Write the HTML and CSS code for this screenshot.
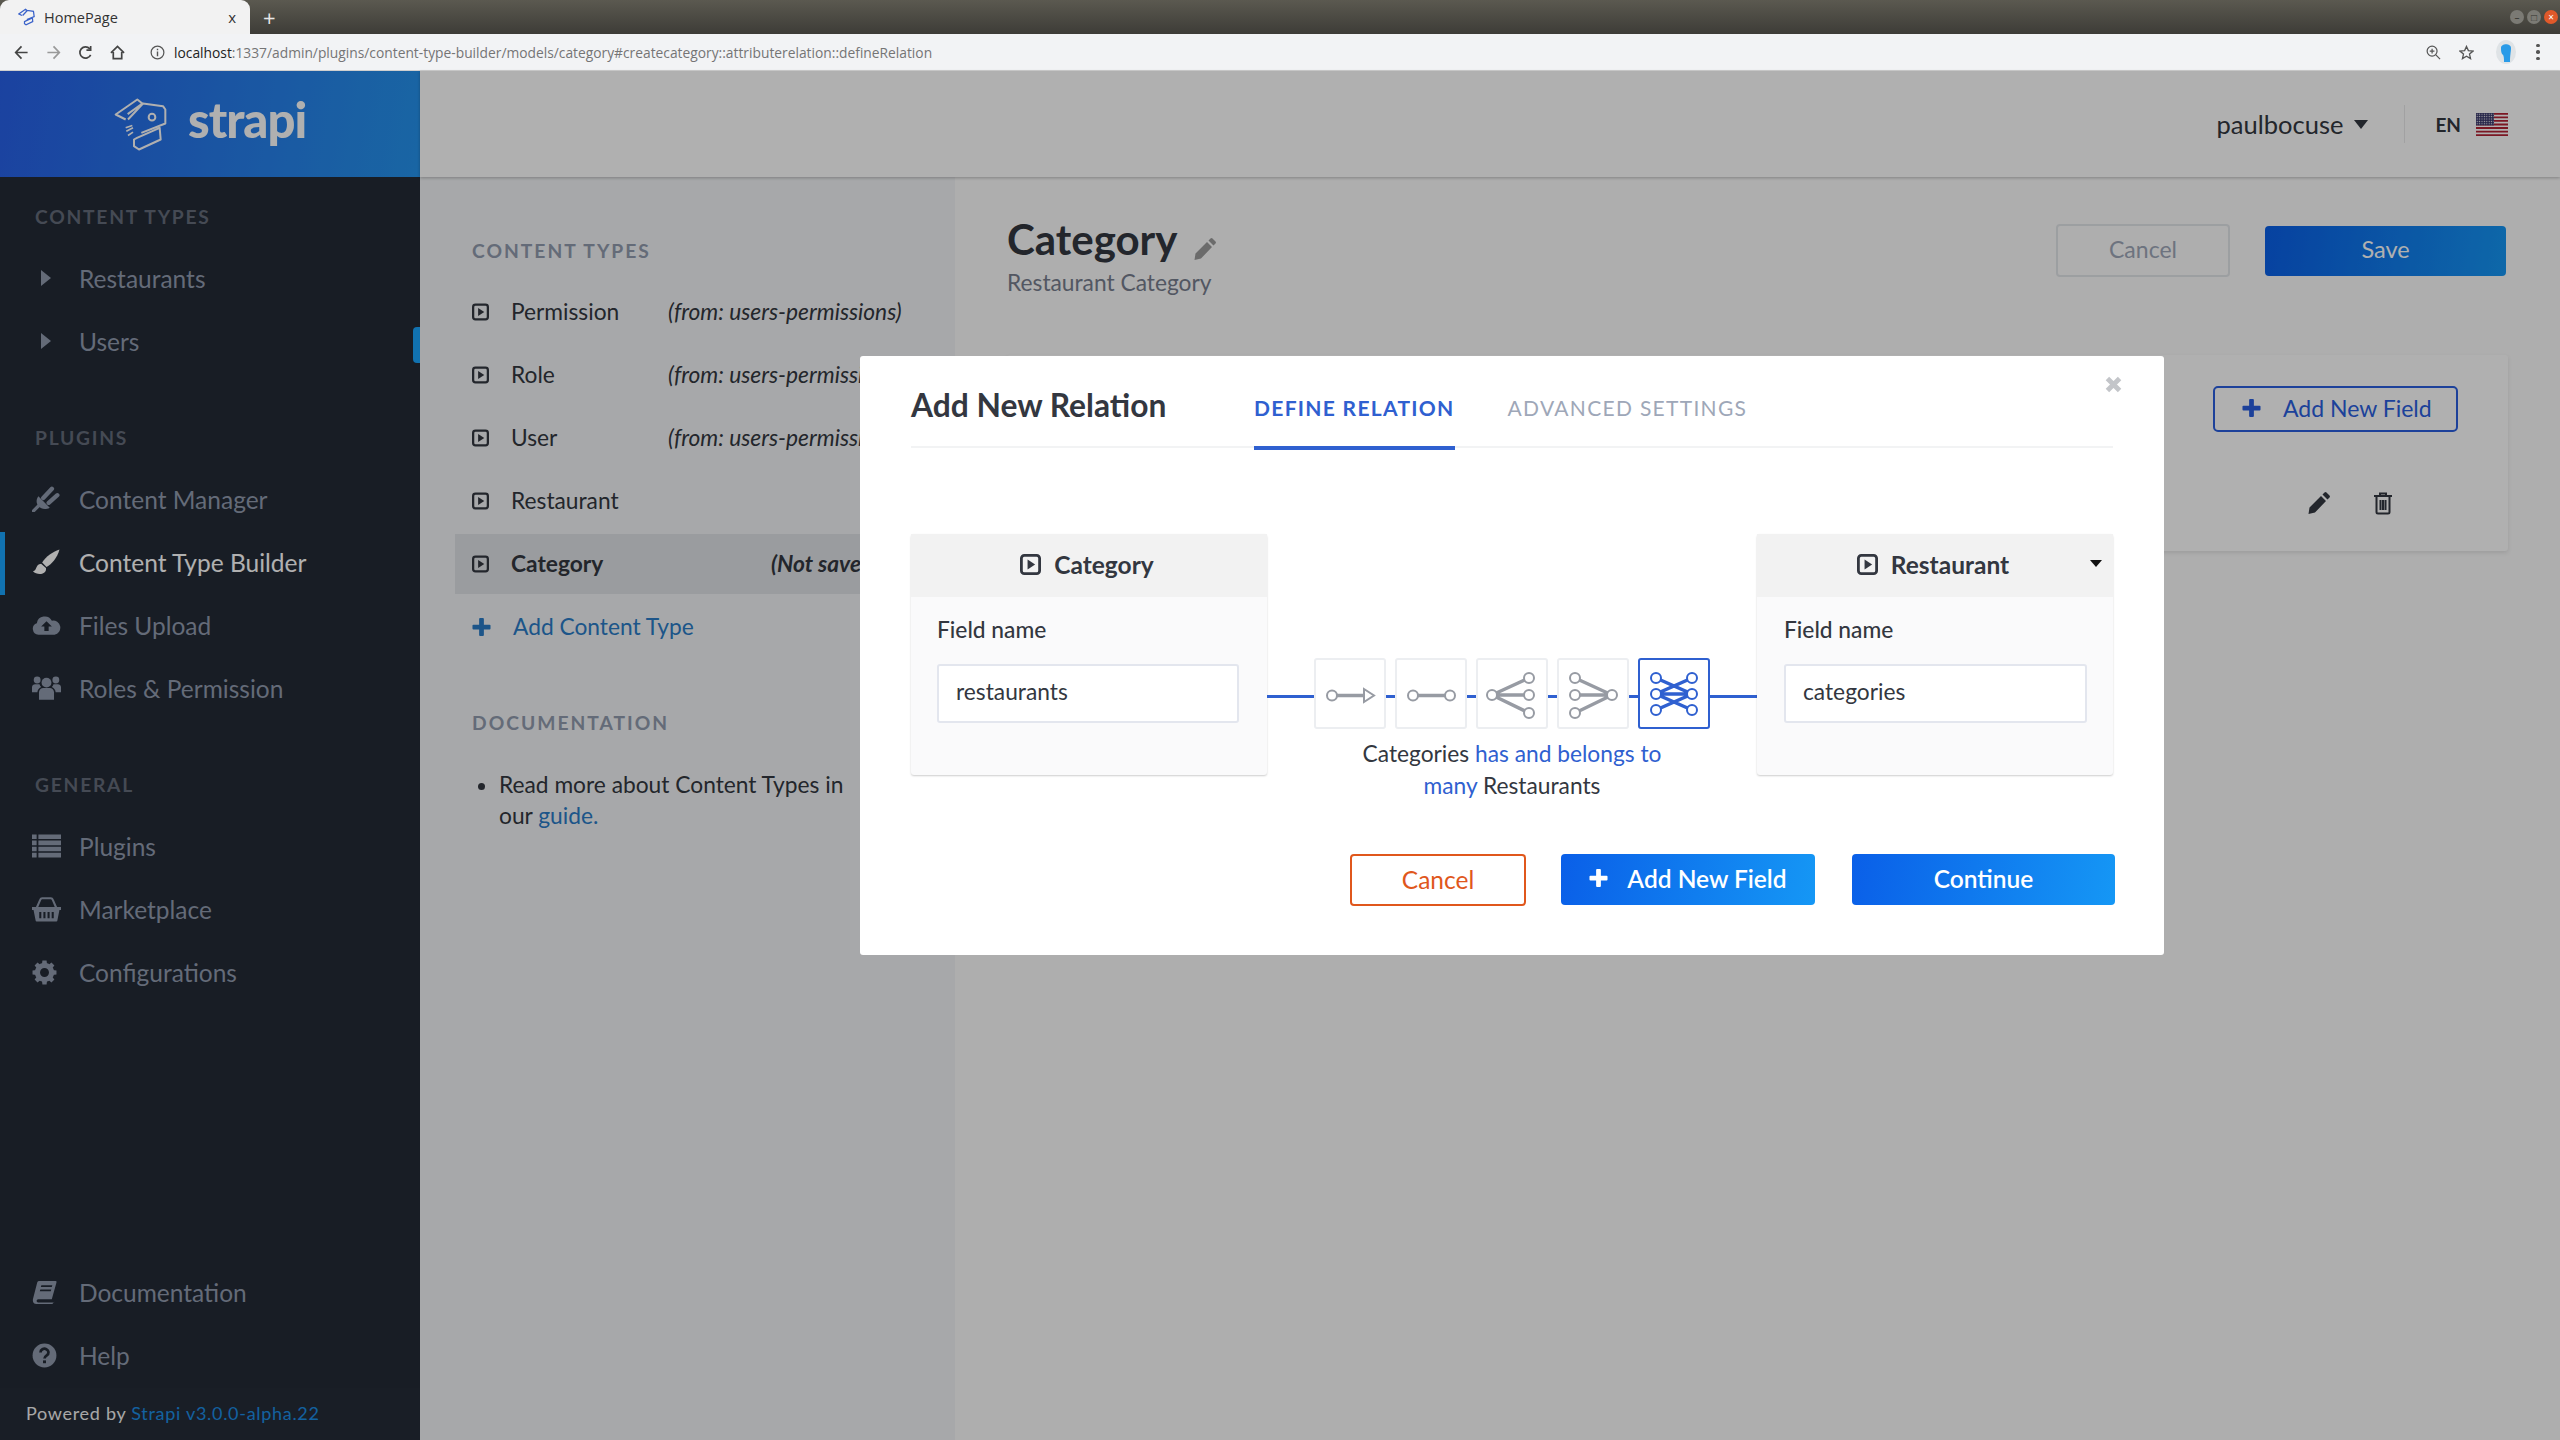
FILE: index.html
```html
<!DOCTYPE html>
<html lang="en">
<head>
  <meta charset="UTF-8">
  <title>HomePage</title>
  <link rel="stylesheet" href="styles.css">
</head>
<body>

<svg class="sprite" width="0" height="0">
  <symbol id="i-type" viewBox="0 0 18 18">
    <rect x="1.200" y="1.200" width="15.600" height="15.600" rx="2.500" fill="none" stroke="currentColor" stroke-width="2.400"/>
    <path d="M6.500 4.800 L13 9 L6.500 13.200Z" fill="currentColor"/>
  </symbol>
  <symbol id="i-plus" viewBox="0 0 20 20">
    <path d="M7.500 1.500 a1 1 0 0 1 1-1 h3 a1 1 0 0 1 1 1 V7.500 h6 a1 1 0 0 1 1 1 v3 a1 1 0 0 1-1 1 H12.500 v6 a1 1 0 0 1-1 1 H8.500 a1 1 0 0 1-1-1 V12.500 H1.500 a1 1 0 0 1-1-1 V8.500 a1 1 0 0 1 1-1 H7.500Z" fill="currentColor"/>
  </symbol>
  <symbol id="i-pencil" viewBox="0 0 24 24">
    <path d="M17.500 1.500 a1.500 1.500 0 0 1 2 0 l3 3 a1.500 1.500 0 0 1 0 2 L20.500 8.500 L15.500 3.500Z M14 5 L19 10 L8 21.500 L1.500 23 L2.500 16.500Z" fill="currentColor"/>
  </symbol>
  <symbol id="i-trash" viewBox="0 0 24 24">
    <path d="M3 5 h18 M9 5 V2.500 h6 V5" fill="none" stroke="currentColor" stroke-width="2"/>
    <path d="M5.500 6 V21 a1.500 1.500 0 0 0 1.500 1.500 H17 a1.500 1.500 0 0 0 1.500-1.500 V6 M9.500 9 v10 M12 9 v10 M14.500 9 v10" fill="none" stroke="currentColor" stroke-width="2"/>
  </symbol>
  <symbol id="i-plug" viewBox="0 0 26 24">
    <path d="M1 23 L6 18" fill="none" stroke="currentColor" stroke-width="3" stroke-linecap="round"/>
    <path d="M5.500 9.500 L16 20 C11.500 22.500 8 21 6 19 C3.500 16.500 3 13 5.500 9.500Z" fill="currentColor"/>
    <path d="M10 11 L18 2.500 M15 15.500 L23 8.500" fill="none" stroke="currentColor" stroke-width="4" stroke-linecap="round"/>
  </symbol>
  <symbol id="i-brush" viewBox="0 0 26 24">
    <path d="M25 .5 C23 8 18 14 13 16.500 L9 12.500 C12 7.500 18.500 2.500 25 .5Z" fill="currentColor"/>
    <path d="M8 13.500 C2.500 14 4.500 20 .5 20.500 C4 24.500 13.500 24 12.500 17.500Z" fill="currentColor"/>
  </symbol>
  <symbol id="i-cloud" viewBox="0 0 27 20">
    <path fill-rule="evenodd" d="M6 19 A5.500 5.500 0 0 1 4.500 8.300 A7.500 7.500 0 0 1 18.500 6 A6.500 6.500 0 0 1 21 19Z M13.500 6.500 L8.500 11.500 H11.500 V15.500 H15.500 V11.500 H18.500Z" fill="currentColor"/>
  </symbol>
  <symbol id="i-users" viewBox="0 0 27 24">
    <circle cx="13.500" cy="7" r="4.600" fill="currentColor"/>
    <circle cx="4.800" cy="4.500" r="3.200" fill="currentColor"/>
    <circle cx="22.200" cy="4.500" r="3.200" fill="currentColor"/>
    <path d="M6.500 23 V16 a4 4 0 0 1 4-4 h6 a4 4 0 0 1 4 4 V23Z M0 15 V11 a3 3 0 0 1 3-2.500 h4 a6 6 0 0 0 1.500 2.500 A6 6 0 0 0 5 16 H0Z M27 15 V11 a3 3 0 0 0-3-2.500 h-4 a6 6 0 0 1-1.500 2.500 A6 6 0 0 1 22 16 H27Z" fill="currentColor"/>
  </symbol>
  <symbol id="i-list" viewBox="0 0 25 20">
    <path d="M0 0 H4 V4 H0Z M5.500 0 H25 V4 H5.500Z M0 5.300 H4 V9.300 H0Z M5.500 5.300 H25 V9.300 H5.500Z M0 10.600 H4 V14.600 H0Z M5.500 10.600 H25 V14.600 H5.500Z M0 15.900 H4 V19.900 H0Z M5.500 15.900 H25 V19.900 H5.500Z" fill="currentColor"/>
  </symbol>
  <symbol id="i-basket" viewBox="0 0 28 24">
    <path d="M4.500 11 L8 3 a2 2 0 0 1 2-1.300 h8 a2 2 0 0 1 2 1.300 L23.500 11" fill="none" stroke="currentColor" stroke-width="2"/>
    <path fill-rule="evenodd" d="M0 10 H28 V13 H26.500 L24.500 23 a1 1 0 0 1-1 1 H4.500 a1 1 0 0 1-1-1 L1.500 13 H0Z M7 15 V21 H9 V15Z M11 15 V21 H13 V15Z M15 15 V21 H17 V15Z M19 15 V21 H21 V15Z" fill="currentColor"/>
  </symbol>
  <symbol id="i-cog" viewBox="0 0 24 24">
    <circle cx="12" cy="12" r="6.800" fill="none" stroke="currentColor" stroke-width="5"/>
    <path d="M10 .5 h4 l.5 4 h-5Z M10 23.500 h4 l.5-4 h-5Z M.5 10 v4 l4 .5 v-5Z M23.500 10 v4 l-4 .5 v-5Z M2.500 5.300 l2.800-2.800 l3.200 2.500 l-3.500 3.500Z M21.500 5.300 l-2.800-2.800 l-3.200 2.500 l3.500 3.500Z M2.500 18.700 l2.800 2.800 l3.200-2.500 l-3.500-3.500Z M21.500 18.700 l-2.800 2.800 l-3.200-2.500 l3.500-3.500Z" fill="currentColor"/>
  </symbol>
  <symbol id="i-book" viewBox="0 0 24 24">
    <path fill-rule="evenodd" d="M6.500 1 H22.500 a1 1 0 0 1 1 1.300 L19 18.500 H6 C4 18.500 4 21.500 6 21.500 H21 L22.500 20 L19.500 23 H4 C1 23 .5 20 1 18 L5 2.500 a2 2 0 0 1 1.500-1.500Z M9 5 L8.500 6.800 H19 L19.500 5Z M8 9 L7.500 10.800 H18 L18.500 9Z" fill="currentColor"/>
  </symbol>
  <symbol id="i-help" viewBox="0 0 22 22">
    <circle cx="11" cy="11" r="10.500" fill="currentColor"/>
    <path d="M7.500 8.300 a3.500 3.200 0 1 1 5.500 2.600 c-1.300.9-2 1.400-2 2.700" fill="none" stroke="#232a36" stroke-width="2.400"/>
    <path d="M9.700 15.300 h2.600 v2.500 h-2.600Z" fill="#232a36"/>
  </symbol>
</svg>

<div class="tabstrip">
  <div class="tab">
    <svg class="tab-icon" viewBox="40 30 165 170">
      <path d="M78 100 L48 85 L113 40 L128 52 M85 100 L130 52 L190 60 L197 112 L125 140 M112 155 L180 125 L183 160 L118 190 L103 180 V160 Z" fill="none" stroke="#3a62c9" stroke-width="12"/>
    </svg>
    <span class="tab-title">HomePage</span>
    <span class="tab-close">x</span>
  </div>
  <span class="tab-new">+</span>
  <div class="win-btns">
    <span class="win-btn">–</span>
    <span class="win-btn">□</span>
    <span class="win-btn win-close">×</span>
  </div>
</div>

<div class="toolbar">
  <svg class="tool-icon" viewBox="0 0 16 16"><path d="M14.500 8 H2 M8 1.500 L1.800 8 L8 14.500" fill="none" stroke="#444" stroke-width="1.800"/></svg>
  <svg class="tool-icon" viewBox="0 0 16 16"><path d="M1.500 8 H14 M8 1.500 L14.200 8 L8 14.500" fill="none" stroke="#999" stroke-width="1.800"/></svg>
  <svg class="tool-icon" viewBox="0 0 16 16"><path d="M13.500 10.500 A6 6 0 1 1 12.500 4 M13.500 1 V5.500 H9" fill="none" stroke="#444" stroke-width="1.800"/></svg>
  <svg class="tool-icon" viewBox="0 0 16 16"><path d="M1 8.500 L8 1.500 L15 8.500 M3.500 7.500 V14.500 H12.500 V7.500" fill="none" stroke="#444" stroke-width="1.800"/></svg>
  <svg class="info-icon" viewBox="0 0 16 16"><circle cx="8" cy="8" r="6.800" fill="none" stroke="#555" stroke-width="1.300"/><path d="M8 7 V12 M8 4 V5.500" stroke="#555" stroke-width="1.500"/></svg>
  <div class="url"><span class="url-host">localhost</span>:1337/admin/plugins/content-type-builder/models/category#createcategory::attributerelation::defineRelation</div>
  <svg class="tool-end zoom-icon" viewBox="0 0 16 16"><circle cx="6.500" cy="6.500" r="5.300" fill="none" stroke="#555" stroke-width="1.300"/><path d="M10.500 10.500 L15 15 M4 6.500 H9 M6.500 4 V9" stroke="#555" stroke-width="1.300"/></svg>
  <svg class="tool-end star-icon" viewBox="0 0 16 16"><path d="M8 1.500 L10 6 L15 6.500 L11.200 9.700 L12.300 14.500 L8 12 L3.700 14.500 L4.800 9.700 L1 6.500 L6 6Z" fill="none" stroke="#555" stroke-width="1.400"/></svg>
  <svg class="avatar" viewBox="0 0 20 24"><ellipse cx="10" cy="12" rx="10" ry="12" fill="#dfe3e6"/><path d="M5 8 C5 3 15 3 15 8 C15 12 14 15 14 22 H8 C8 18 8 15 6 14 C5 12 5 10 5 8Z" fill="#2a9be8"/></svg>
  <div class="menu-dots"><i></i><i></i><i></i></div>
</div>

<div class="app">

  <aside class="sidebar">
    <div class="brand">
      <svg class="brand-icon" viewBox="40 30 165 170">
        <path d="M78 100 L48 85 L113 40 L128 52 L84 84 M85 100 L130 52 L190 60 L197 70 V112 L125 140 M112 155 L180 125 L183 160 L118 190 L103 180 V160 Z" fill="none" stroke="#fff" stroke-width="6" stroke-linejoin="round"/>
        <circle cx="157" cy="93" r="10" fill="none" stroke="#fff" stroke-width="6"/>
        <path d="M78 125 L98 118 M80 135 L100 125 M85 148 L100 138" stroke="#fff" stroke-width="5"/>
      </svg>
      <span class="brand-name">strapi</span>
    </div>

    <nav class="nav">
      <div class="nav-section">
        <div class="nav-label">CONTENT TYPES</div>
        <div class="nav-item"><span class="nav-ico"><i class="caret-right"></i></span>Restaurants</div>
        <div class="nav-item"><span class="nav-ico"><i class="caret-right"></i></span>Users</div>
      </div>
      <div class="nav-section">
        <div class="nav-label">PLUGINS</div>
        <div class="nav-item"><span class="nav-ico"><svg class="ico-26"><use href="#i-plug"/></svg></span>Content Manager</div>
        <div class="nav-item active"><span class="nav-ico"><svg class="ico-26"><use href="#i-brush"/></svg></span>Content Type Builder</div>
        <div class="nav-item"><span class="nav-ico"><svg class="ico-26"><use href="#i-cloud"/></svg></span>Files Upload</div>
        <div class="nav-item"><span class="nav-ico"><svg class="ico-26"><use href="#i-users"/></svg></span>Roles &amp; Permission</div>
      </div>
      <div class="nav-section">
        <div class="nav-label">GENERAL</div>
        <div class="nav-item"><span class="nav-ico"><svg class="ico-26"><use href="#i-list"/></svg></span>Plugins</div>
        <div class="nav-item"><span class="nav-ico"><svg class="ico-26"><use href="#i-basket"/></svg></span>Marketplace</div>
        <div class="nav-item"><span class="nav-ico"><svg class="ico-22"><use href="#i-cog"/></svg></span>Configurations</div>
      </div>
    </nav>

    <div class="nav-bottom">
      <div class="nav-item"><span class="nav-ico"><svg class="ico-22"><use href="#i-book"/></svg></span>Documentation</div>
      <div class="nav-item"><span class="nav-ico"><svg class="ico-22"><use href="#i-help"/></svg></span>Help</div>
    </div>
    <div class="powered">Powered by <a>Strapi v3.0.0-alpha.22</a></div>
    <span class="side-tab"></span>
  </aside>

  <div class="content">
    <header class="topbar">
      <span class="user-name">paulbocuse</span>
      <i class="caret-down"></i>
      <span class="top-sep"></span>
      <span class="lang">EN</span>
      <svg class="flag" viewBox="0 0 32 23">
        <defs>
          <pattern id="stars" width="2.400" height="2.400" patternUnits="userSpaceOnUse">
            <rect width="2.400" height="2.400" fill="#3c3b6e"/>
            <circle cx="1.200" cy="1.200" r=".6" fill="#fff"/>
          </pattern>
        </defs>
        <rect width="32" height="23" fill="#fff"/>
        <path d="M0 0 H32 V1.800 H0Z M0 3.500 H32 V5.300 H0Z M0 7 H32 V8.800 H0Z M0 10.600 H32 V12.400 H0Z M0 14.100 H32 V15.900 H0Z M0 17.700 H32 V19.500 H0Z M0 21.200 H32 V23 H0Z" fill="#b22234"/>
        <rect width="18" height="12.400" fill="url(#stars)"/>
      </svg>
    </header>

    <div class="panes">
      <section class="left-pane">
        <div class="pane-label">CONTENT TYPES</div>
        <ul class="ct-list">
          <li class="ct-item"><svg class="ct-ico"><use href="#i-type"/></svg><span class="ct-name">Permission</span><em class="ct-from">(from: users-permissions)</em></li>
          <li class="ct-item"><svg class="ct-ico"><use href="#i-type"/></svg><span class="ct-name">Role</span><em class="ct-from">(from: users-permissions)</em></li>
          <li class="ct-item"><svg class="ct-ico"><use href="#i-type"/></svg><span class="ct-name">User</span><em class="ct-from">(from: users-permissions)</em></li>
          <li class="ct-item"><svg class="ct-ico"><use href="#i-type"/></svg><span class="ct-name">Restaurant</span></li>
          <li class="ct-item ct-active"><svg class="ct-ico"><use href="#i-type"/></svg><span class="ct-name">Category</span><em class="ct-from ct-unsaved">(Not saved)</em></li>
          <li class="ct-item ct-add"><svg class="add-ico"><use href="#i-plus"/></svg>Add Content Type</li>
        </ul>
        <div class="pane-label doc-label">DOCUMENTATION</div>
        <ul class="doc-list">
          <li>Read more about Content Types in our <a>guide.</a></li>
        </ul>
      </section>

      <main class="main">
        <div class="main-head">
          <div>
            <h1 class="page-title">Category <svg class="title-pencil"><use href="#i-pencil"/></svg></h1>
            <p class="page-sub">Restaurant Category</p>
          </div>
          <div class="head-btns">
            <button class="btn-ghost">Cancel</button>
            <button class="btn-save">Save</button>
          </div>
        </div>
        <div class="card">
          <button class="btn-outline"><svg class="plus-ico"><use href="#i-plus"/></svg>Add New Field</button>
          <div class="card-actions">
            <svg class="act-ico"><use href="#i-pencil"/></svg>
            <svg class="act-ico"><use href="#i-trash"/></svg>
          </div>
        </div>
      </main>
    </div>
  </div>

  <div class="backdrop"></div>

  <div class="modal">
    <span class="modal-close">
      <svg viewBox="0 0 14 14" width="17" height="17"><path d="M2 2 L12 12 M12 2 L2 12" stroke="#c3c5c9" stroke-width="4"/></svg>
    </span>
    <div class="modal-head">
      <h2 class="modal-title">Add New Relation</h2>
      <div class="tabs">
        <span class="mtab mtab-on">DEFINE RELATION</span>
        <span class="mtab">ADVANCED SETTINGS</span>
      </div>
    </div>

    <div class="relation">
      <div class="rel-box">
        <div class="rel-head"><svg class="rel-ico"><use href="#i-type"/></svg>Category</div>
        <div class="rel-body">
          <label class="field-label">Field name</label>
          <div class="field-input">restaurants</div>
        </div>
      </div>

      <div class="rel-mid">
        <div class="rel-row">
          <div class="rel-opt">
            <svg viewBox="0 0 72 71">
              <path d="M18 37.500 H50" stroke="#979ba3" stroke-width="3.500"/>
              <path d="M50 31 L60 37.500 L50 44Z" fill="#fff" stroke="#979ba3" stroke-width="2"/>
              <circle cx="18" cy="37.500" r="5" fill="#fff" stroke="#979ba3" stroke-width="2"/>
            </svg>
          </div>
          <div class="rel-opt">
            <svg viewBox="0 0 72 71">
              <path d="M18 37.500 H55" stroke="#979ba3" stroke-width="3.500"/>
              <circle cx="18" cy="37.500" r="5" fill="#fff" stroke="#979ba3" stroke-width="2"/>
              <circle cx="55" cy="37.500" r="5" fill="#fff" stroke="#979ba3" stroke-width="2"/>
            </svg>
          </div>
          <div class="rel-opt">
            <svg viewBox="0 0 72 71">
              <path d="M16 37 L53 20 M16 37 H53 M16 37 L53 55" stroke="#979ba3" stroke-width="3.500"/>
              <circle cx="16" cy="37" r="5" fill="#fff" stroke="#979ba3" stroke-width="2"/>
              <circle cx="53" cy="20" r="5" fill="#fff" stroke="#979ba3" stroke-width="2"/>
              <circle cx="53" cy="37" r="5" fill="#fff" stroke="#979ba3" stroke-width="2"/>
              <circle cx="53" cy="55" r="5" fill="#fff" stroke="#979ba3" stroke-width="2"/>
            </svg>
          </div>
          <div class="rel-opt">
            <svg viewBox="0 0 72 71">
              <path d="M18 20 L55 37 M18 37 H55 M18 55 L55 37" stroke="#979ba3" stroke-width="3.500"/>
              <circle cx="18" cy="20" r="5" fill="#fff" stroke="#979ba3" stroke-width="2"/>
              <circle cx="18" cy="37" r="5" fill="#fff" stroke="#979ba3" stroke-width="2"/>
              <circle cx="18" cy="55" r="5" fill="#fff" stroke="#979ba3" stroke-width="2"/>
              <circle cx="55" cy="37" r="5" fill="#fff" stroke="#979ba3" stroke-width="2"/>
            </svg>
          </div>
          <div class="rel-opt rel-opt-on">
            <svg viewBox="0 0 72 71">
              <path d="M18 20 L54 36 L18 52 M54 20 L18 36 L54 52 M18 36 H54" fill="none" stroke="#2f60d0" stroke-width="3.500"/>
              <circle cx="18" cy="20" r="5" fill="#fff" stroke="#2f60d0" stroke-width="2"/>
              <circle cx="18" cy="36" r="5" fill="#fff" stroke="#2f60d0" stroke-width="2"/>
              <circle cx="18" cy="52" r="5" fill="#fff" stroke="#2f60d0" stroke-width="2"/>
              <circle cx="54" cy="20" r="5" fill="#fff" stroke="#2f60d0" stroke-width="2"/>
              <circle cx="54" cy="36" r="5" fill="#fff" stroke="#2f60d0" stroke-width="2"/>
              <circle cx="54" cy="52" r="5" fill="#fff" stroke="#2f60d0" stroke-width="2"/>
            </svg>
          </div>
        </div>
        <p class="rel-caption">Categories <span class="rel-hl">has and belongs to many</span> Restaurants</p>
      </div>

      <div class="rel-box">
        <div class="rel-head"><svg class="rel-ico"><use href="#i-type"/></svg>Restaurant<i class="rel-caret"></i></div>
        <div class="rel-body rel-body-right">
          <label class="field-label">Field name</label>
          <div class="field-input">categories</div>
        </div>
      </div>
    </div>

    <div class="modal-foot">
      <button class="btn-cancel">Cancel</button>
      <button class="btn-primary btn-add"><svg class="plus-ico"><use href="#i-plus"/></svg>Add New Field</button>
      <button class="btn-primary btn-continue">Continue</button>
    </div>
  </div>
</div>

</body>
</html>
```

FILE: styles.css
```css
*{
  box-sizing: border-box;
}
html, body{
  margin: 0;
  height: 1440px;
  overflow: hidden;
}
body{
  font-family: "Lato", "Liberation Sans", sans-serif;
  font-size: 22.75px;
  color: #333740;
  background: #fafafb;
}
.sprite{
  position: absolute;
}
button{
  font-family: inherit;
  padding: 0;
  cursor: pointer;
}
ul{
  list-style: none;
  margin: 0;
  padding: 0;
}

/* browser chrome */
.tabstrip{
  height: 34px;
  display: flex;
  align-items: flex-end;
  background: linear-gradient(#5b5950, #3d3c37);
  font-family: "Open Sans", sans-serif;
}
.tab{
  width: 250px;
  height: 34px;
  padding: 0 14px 0 18px;
  display: flex;
  align-items: center;
  background: #f2f2f2;
  border-radius: 9px 9px 0 0;
  font-size: 14.5px;
  color: #333;
}
.tab-icon{
  width: 17px;
  height: 20px;
  margin-right: 9px;
}
.tab-title{
  flex: 1;
}
.tab-close{
  font-size: 15px;
}
.tab-new{
  align-self: center;
  margin-left: 13px;
  color: #e8e8e8;
  font-size: 22px;
  line-height: 1;
}
.win-btns{
  align-self: center;
  margin-left: auto;
  margin-right: 2px;
  display: flex;
  gap: 3px;
}
.win-btn{
  width: 14px;
  height: 14px;
  border-radius: 50%;
  background: #7b7a74;
  color: #35342f;
  font-size: 10px;
  line-height: 14px;
  text-align: center;
}
.win-close{
  background: #e0592a;
  color: #fff;
}
.toolbar{
  height: 37px;
  padding: 0 0 0 14px;
  display: flex;
  align-items: center;
  background: #f2f3f5;
  border-bottom: 1px solid #cfcfcf;
}
.tool-icon{
  width: 15px;
  height: 15px;
  margin-right: 17px;
}
.info-icon{
  width: 15px;
  height: 15px;
  margin-left: 8px;
  margin-right: 9px;
}
.url{
  flex: 1;
  font-family: "Open Sans", sans-serif;
  font-size: 13.8px;
  color: #757575;
  white-space: nowrap;
}
.url-host{
  color: #222;
}
.tool-end{
  width: 15px;
  height: 15px;
}
.star-icon{
  margin-left: 18px;
}
.avatar{
  width: 20px;
  height: 24px;
  margin-left: 22px;
}
.menu-dots{
  width: 4px;
  margin: 0 20px 0 20px;
  display: flex;
  flex-direction: column;
  gap: 3px;
}
.menu-dots i{
  width: 3.500px;
  height: 3.500px;
  border-radius: 50%;
  background: #555;
}

/* app */
.app{
  position: relative;
  height: 1369px;
  display: flex;
}
.sidebar{
  position: relative;
  width: 420px;
  flex: none;
  display: flex;
  flex-direction: column;
  background: #232a36;
  color: #919bae;
}
.brand{
  height: 106px;
  flex: none;
  padding-left: 113px;
  display: flex;
  align-items: center;
  background: linear-gradient(100deg, #2860e8, #2594ee);
}
.brand-icon{
  width: 55px;
  height: 57px;
}
.brand-name{
  margin-left: 20px;
  margin-top: -9px;
  color: #fff;
  font-size: 49px;
  font-weight: 900;
  line-height: 1;
  letter-spacing: -1px;
}
.nav{
  flex: 1;
  padding-top: 20px;
}
.nav-section{
  margin-bottom: 44px;
}
.nav-label{
  height: 40px;
  margin-bottom: 11px;
  padding-left: 35px;
  font-size: 19.25px;
  font-weight: 700;
  line-height: 40px;
  letter-spacing: 1.750px;
  color: #646c7a;
}
.nav-item{
  height: 63px;
  padding-bottom: 3px;
  display: flex;
  align-items: center;
  font-size: 24.5px;
}
.nav-item.active{
  color: #fff;
  box-shadow: inset 5px 0 0 #1aa5ff;
}
.nav-ico{
  width: 79px;
  padding-left: 32px;
  flex: none;
  display: flex;
  align-items: center;
}
.ico-26{
  width: 29px;
  height: 26px;
}
.ico-22{
  width: 25px;
  height: 25px;
}
.caret-right{
  margin-left: 9px;
  width: 0;
  height: 0;
  border-left: 10px solid #919bae;
  border-top: 8px solid transparent;
  border-bottom: 8px solid transparent;
}
.powered{
  height: 52px;
  padding-left: 26px;
  flex: none;
  background: #252c38;
  font-size: 18px;
  line-height: 50px;
  letter-spacing: .7px;
  color: #f3f3f3;
}
.powered a{
  color: #1c8ee6;
}
.side-tab{
  position: absolute;
  right: 0;
  top: 256px;
  width: 7px;
  height: 36px;
  background: #1aa5ff;
  border-radius: 4px 0 0 4px;
}

.content{
  flex: 1;
  min-width: 0;
  display: flex;
  flex-direction: column;
}
.topbar{
  height: 106px;
  flex: none;
  padding-right: 52px;
  display: flex;
  align-items: center;
  justify-content: flex-end;
  background: #fff;
  box-shadow: 0 1px 3px rgba(0,0,0,.25);
  position: relative;
  color: #333740;
}
.user-name{
  font-size: 25.5px;
}
.caret-down{
  margin-left: 11px;
  width: 0;
  height: 0;
  border-top: 9px solid #333740;
  border-left: 7.500px solid transparent;
  border-right: 7.500px solid transparent;
}
.top-sep{
  width: 1px;
  height: 38px;
  margin: 0 30px 0 36px;
  background: #e9eaeb;
}
.lang{
  font-size: 19px;
  font-weight: 700;
  margin-right: 15px;
}
.flag{
  width: 32px;
  height: 23px;
}

.panes{
  flex: 1;
  display: flex;
  min-height: 0;
}
.left-pane{
  width: 535px;
  flex: none;
  padding: 54px 0 0 35px;
  background: #f2f4f6;
}
.pane-label{
  height: 40px;
  padding-left: 17px;
  font-size: 19.25px;
  font-weight: 700;
  line-height: 40px;
  letter-spacing: 2px;
  color: #919bae;
}
.ct-list{
  margin-top: 11px;
}
.ct-item{
  height: 60px;
  margin-bottom: 3px;
  padding-left: 17px;
  padding-bottom: 1px;
  display: flex;
  align-items: center;
  white-space: nowrap;
  overflow: hidden;
}
.ct-ico{
  width: 17px;
  height: 18px;
  flex: none;
}
.ct-name{
  width: 157px;
  margin-left: 22px;
  flex: none;
}
.ct-from{
  width: 240px;
  flex: none;
}
.ct-active{
  background: #e0e3e6;
  font-weight: 700;
}
.ct-unsaved{
  padding-left: 103px;
}
.ct-add{
  color: #2a7cc7;
}
.add-ico{
  width: 19px;
  height: 20px;
  margin-right: 22px;
}
.doc-label{
  margin-top: 46px;
}
.doc-list{
  margin: 26px 0 0 27px;
  padding-left: 17px;
  width: 390px;
  list-style: disc;
  line-height: 31px;
}
.doc-list a{
  color: #2a7cc7;
}

.main{
  flex: 1;
  min-width: 0;
  padding: 38px 52px 0;
  background: #fcfcfc;
}
.main-head{
  height: 140px;
  display: flex;
  justify-content: space-between;
  align-items: flex-start;
}
.page-title{
  margin: -1px 0 1px;
  display: flex;
  align-items: center;
  font-size: 42px;
  font-weight: 700;
  line-height: 50px;
  color: #333740;
}
.title-pencil{
  width: 24px;
  height: 24px;
  margin-left: 16px;
  margin-top: 19px;
  color: #9b9b9b;
}
.page-sub{
  margin: 3px 0 0;
  line-height: 32px;
  color: #787e8f;
}
.head-btns{
  margin-top: 9px;
  margin-right: 2px;
  display: flex;
  align-items: center;
  gap: 35px;
}
.btn-ghost{
  width: 174px;
  height: 53px;
  padding-bottom: 4px;
  background: transparent;
  border: 2px solid #e3e6ea;
  border-radius: 4px;
  font-size: 23px;
  color: #9ea7b8;
}
.btn-save, .btn-primary{
  height: 50px;
  padding-bottom: 3px;
  border: 0;
  border-radius: 4px;
  background: linear-gradient(100deg, #0a5fe8, #1597f5);
  color: #fff;
  font-size: 23.500px;
}
.btn-save{
  width: 241px;
}
.card{
  height: 196px;
  padding: 31px 50px 0 0;
  display: flex;
  flex-direction: column;
  align-items: flex-end;
  background: #fff;
  border-radius: 3px;
  box-shadow: 0 2px 4px rgba(0,0,0,.1);
}
.btn-outline{
  width: 245px;
  height: 46px;
  display: flex;
  align-items: center;
  padding: 0 0 2px 27px;
  background: transparent;
  border: 2px solid #2a5fe0;
  border-radius: 5px;
  font-size: 23px;
  color: #2a5fe0;
}
.plus-ico{
  width: 19px;
  height: 20px;
  margin-right: 22px;
}
.card-actions{
  margin: 59px 63px 0 0;
  display: flex;
  gap: 40px;
}
.act-ico{
  width: 24px;
  height: 24px;
  color: #333740;
}

/* overlay */
.backdrop{
  position: absolute;
  inset: 0;
  background: rgba(0,0,0,.31);
}
.modal{
  position: absolute;
  left: 860px;
  top: 285px;
  width: 1304px;
  height: 599px;
  padding: 0 51px 0 51px;
  background: #fff;
  border-radius: 3px;
  color: #333740;
}
.modal-close{
  position: absolute;
  right: 42px;
  top: 20px;
  line-height: 0;
}
.modal-head{
  height: 92px;
  display: flex;
  align-items: flex-end;
  border-bottom: 2px solid #f2f3f4;
}
.modal-title{
  width: 343px;
  margin: 0;
  padding-bottom: 21px;
  font-size: 31.75px;
  font-weight: 700;
  line-height: 40px;
}
.tabs{
  display: flex;
  gap: 53px;
}
.mtab{
  height: 59px;
  margin-bottom: -4px;
  padding-top: 1px;
  font-size: 21px;
  line-height: 32px;
  letter-spacing: 1.300px;
  color: #9ea7b8;
  border-bottom: 4px solid transparent;
}
.mtab-on{
  color: #2f60d0;
  font-weight: 700;
  border-bottom-color: #2f60d0;
}
.relation{
  margin-top: 86px;
  display: flex;
}
.rel-box{
  width: 356px;
  height: 241px;
  flex: none;
  background: #fafafb;
  border-radius: 3px;
  box-shadow: 0 1px 2px rgba(0,0,0,.2);
}
.rel-head{
  height: 63px;
  padding: 0 4px 2px 0;
  display: flex;
  align-items: center;
  justify-content: center;
  position: relative;
  background: #f2f2f2;
  font-size: 24.5px;
  font-weight: 700;
}
.rel-ico{
  width: 21px;
  height: 21px;
  margin-right: 13px;
  color: #333740;
}
.rel-caret{
  position: absolute;
  right: 11px;
  top: 26px;
  width: 0;
  height: 0;
  border-top: 7px solid #111;
  border-left: 6.500px solid transparent;
  border-right: 6.500px solid transparent;
}
.rel-body{
  padding: 16px 28px 0 26px;
}
.rel-body-right{
  padding: 16px 26px 0 27px;
}
.field-label{
  display: block;
  line-height: 34px;
  font-weight: 500;
}
.field-input{
  height: 59px;
  margin-top: 17px;
  padding-left: 17px;
  background: #fff;
  border: 2px solid #e3e6ee;
  border-radius: 3px;
  line-height: 52px;
}
.rel-mid{
  flex: 1;
  padding-top: 124px;
}
.rel-row{
  height: 71px;
  display: flex;
  justify-content: center;
  gap: 9px;
  background: linear-gradient(#2f60d0, #2f60d0) 0 37px / 100% 3px no-repeat;
}
.rel-opt{
  width: 72px;
  height: 71px;
  background: #fff;
  border: 2px solid #eceef1;
  border-radius: 3px;
}
.rel-opt svg{
  display: block;
  width: 72px;
  height: 71px;
  margin: -2px;
}
.rel-opt-on{
  border-color: #2f60d0;
}
.rel-caption{
  width: 330px;
  margin: 9px auto 0;
  text-align: center;
  line-height: 31.500px;
}
.rel-hl{
  color: #2f60d0;
}
.modal-foot{
  margin: 53px -2px 0 0;
  display: flex;
  justify-content: flex-end;
}
.btn-cancel{
  width: 176px;
  height: 52px;
  padding-bottom: 2px;
  margin-right: 35px;
  background: #fff;
  border: 2px solid #e0571c;
  border-radius: 4px;
  font-size: 24.500px;
  color: #e0571c;
}
.btn-primary{
  height: 51px;
  font-size: 24.500px;
  font-weight: 600;
}
.btn-add{
  width: 254px;
  margin-right: 37px;
  display: flex;
  align-items: center;
  justify-content: center;
}
.btn-add .plus-ico{
  margin-right: 19px;
}
.btn-continue{
  width: 263px;
}
```
